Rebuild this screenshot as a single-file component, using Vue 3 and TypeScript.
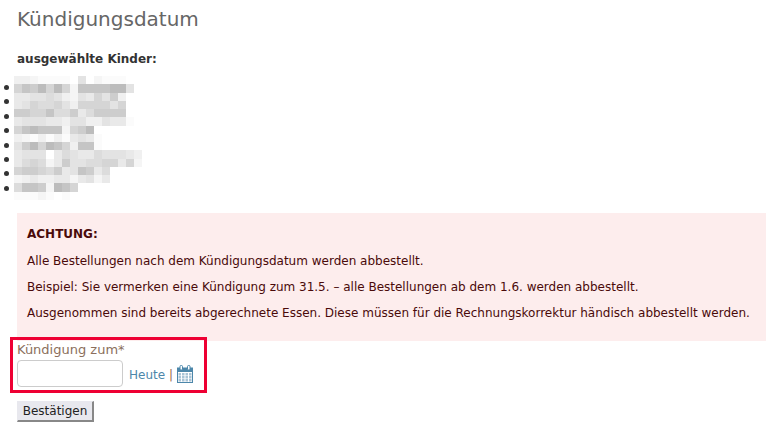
<script setup lang="ts">
const levels: Record<string, string> = {
  '.': '#ffffff', '0': '#fbfbfb', '1': '#f5f5f5', '2': '#f0f0f0', '3': '#e9e9e9', '4': '#e3e3e3',
  '5': '#dcdcdc', '6': '#d5d5d5', '7': '#cdcdcd', '8': '#c5c5c5', '9': '#bcbcbc',
}
const rows: string[] = [
  '2210000.4.1000..',
  '687969618888994.',
  '33445421436472..',
  '34655642666646..',
  '77668557357777..',
  '344433244224330.',
  '6898881679......',
  '21020203430.....',
  '47969862880.....',
  '3444.35433544432',
  '3565137445566361',
  '677657348735....',
  '123223313413....',
  '58871986........',
  '00010.0.........',
]
const cells = rows.flatMap((r) => r.split('').map((c) => levels[c] ?? '#ffffff'))
const items = Array.from({ length: 8 }, (_, i) => i)
</script>

<template>
  <main class="page">
    <h1 class="title">Kündigungsdatum</h1>
    <p class="subhead">ausgewählte Kinder:</p>
    <div class="kids">
      <ul class="kid-list">
        <li v-for="i in items" :key="i">&nbsp;</li>
      </ul>
      <div class="mosaic" aria-hidden="true">
        <span v-for="(c, i) in cells" :key="i" :style="{ background: c }"></span>
      </div>
    </div>
    <section class="alert">
      <p><strong>ACHTUNG:</strong></p>
      <p>Alle Bestellungen nach dem Kündigungsdatum werden abbestellt.</p>
      <p>Beispiel: Sie vermerken eine Kündigung zum 31.5. – alle Bestellungen ab dem 1.6. werden abbestellt.</p>
      <p>Ausgenommen sind bereits abgerechnete Essen. Diese müssen für die Rechnungskorrektur händisch abbestellt werden.</p>
    </section>
    <div class="field">
      <label class="label" for="date">Kündigung zum*</label>
      <div class="control">
        <input id="date" class="input" type="text" />
        <a class="link" href="#">Heute</a>
        <span class="sep">|</span>
        <svg class="cal" width="16" height="18" viewBox="0 0 16 18" aria-hidden="true">
          <rect x="0.5" y="3" width="15" height="14.5" fill="#fff" stroke="#4d87aa" />
          <rect x="0" y="3" width="16" height="4" fill="#4d87aa" />
          <rect x="3" y="0.5" width="2.5" height="4.5" rx="1" fill="#fff" stroke="#4d87aa" />
          <rect x="10.5" y="0.5" width="2.5" height="4.5" rx="1" fill="#fff" stroke="#4d87aa" />
          <g fill="#a9c4d6">
            <rect x="1.5" y="8" width="2.5" height="2.5" /><rect x="5" y="8" width="2.5" height="2.5" />
            <rect x="8.5" y="8" width="2.5" height="2.5" /><rect x="12" y="8" width="2.5" height="2.5" />
            <rect x="1.5" y="11" width="2.5" height="2.5" /><rect x="5" y="11" width="2.5" height="2.5" />
            <rect x="8.5" y="11" width="2.5" height="2.5" /><rect x="12" y="11" width="2.5" height="2.5" />
            <rect x="1.5" y="14" width="2.5" height="2.5" /><rect x="5" y="14" width="2.5" height="2.5" />
            <rect x="8.5" y="14" width="2.5" height="2.5" /><rect x="12" y="14" width="2.5" height="2.5" />
          </g>
        </svg>
      </div>
    </div>
    <button class="submit" type="button">Bestätigen</button>
  </main>
</template>

<style scoped>
.page {
  width: 766px;
  height: 433px;
  overflow: hidden;
  box-sizing: border-box;
  padding: 7px 0 0 17px;
  font-family: "DejaVu Sans", sans-serif;
  font-size: 12px;
  color: #333;
}
.title {
  margin: 0;
  font-size: 20px;
  line-height: 24px;
  font-weight: 400;
  color: #666;
}
.subhead {
  margin: 21px 0 0;
  font-size: 12px;
  line-height: 14px;
  font-weight: 700;
  color: #333;
}
.kids {
  position: relative;
  margin: 13px 0 0 -17px;
}
.kid-list {
  margin: 0;
  padding: 2px 0 0 21px;
  list-style: disc;
}
.kid-list li {
  height: 14.4px;
  font-size: 16px;
  line-height: 14.4px;
}
.mosaic {
  position: absolute;
  left: 14px;
  top: -3px;
  display: grid;
  grid-template-columns: repeat(16, 8px);
  grid-auto-rows: 8.27px;
}
.alert {
  width: 749px;
  box-sizing: border-box;
  margin-top: 17px;
  padding: 14px 10px 20px;
  background: #fdeded;
  color: #4a0a0a;
}
.alert p {
  margin: 0 0 12px;
  line-height: 14.4px;
}
.alert p:last-child {
  margin-bottom: 0;
}
.field {
  position: relative;
  width: 187px;
  height: 50px;
  margin: -4px 0 0 -7px;
  padding: 0 0 0 4px;
  border: 3px solid #ee0033;
}
.label {
  display: block;
  margin-top: 2px;
  font-size: 13px;
  line-height: 15px;
  color: #8b6f5c;
}
.control {
  display: flex;
  align-items: center;
  margin-top: 3px;
}
.input {
  width: 106px;
  height: 27px;
  box-sizing: border-box;
  margin: 0;
  border: 1px solid #ccc;
  border-radius: 4px;
  background: #fff;
}
.link {
  margin: 3px 0 0 6px;
  color: #4d87aa;
  text-decoration: none;
}
.sep {
  margin: 3px 0 0 4px;
  color: #9a6a4a;
}
.cal {
  margin-left: 4px;
  margin-top: 2px;
}
.submit {
  display: block;
  margin: 8px 0 0;
  width: 77px;
  height: 21px;
  padding: 0;
  font-family: inherit;
  font-size: 12px;
  color: #222;
  background: #e8e8ee;
  border: 1px solid #e8e8ee;
  border-right: 2px solid #888;
  border-bottom: 2px solid #888;
}
</style>
